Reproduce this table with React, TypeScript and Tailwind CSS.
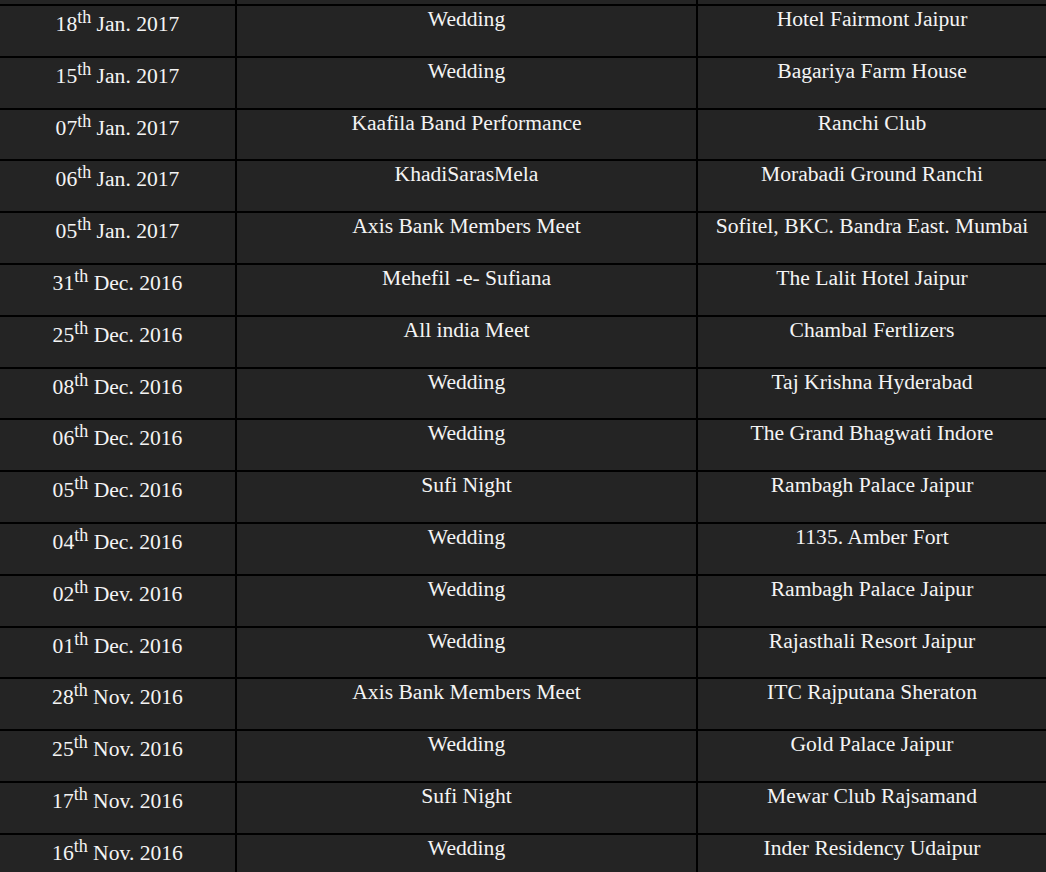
const events = [
  { day: '18', month: 'Jan. 2017', event: 'Wedding', venue: 'Hotel Fairmont Jaipur' },
  { day: '15', month: 'Jan. 2017', event: 'Wedding', venue: 'Bagariya Farm House' },
  { day: '07', month: 'Jan. 2017', event: 'Kaafila Band Performance', venue: 'Ranchi Club' },
  { day: '06', month: 'Jan. 2017', event: 'KhadiSarasMela', venue: 'Morabadi Ground Ranchi' },
  { day: '05', month: 'Jan. 2017', event: 'Axis Bank Members Meet', venue: 'Sofitel, BKC. Bandra East. Mumbai' },
  { day: '31', month: 'Dec. 2016', event: 'Mehefil -e- Sufiana', venue: 'The Lalit Hotel Jaipur' },
  { day: '25', month: 'Dec. 2016', event: 'All india Meet', venue: 'Chambal Fertlizers' },
  { day: '08', month: 'Dec. 2016', event: 'Wedding', venue: 'Taj Krishna Hyderabad' },
  { day: '06', month: 'Dec. 2016', event: 'Wedding', venue: 'The Grand Bhagwati Indore' },
  { day: '05', month: 'Dec. 2016', event: 'Sufi Night', venue: 'Rambagh Palace Jaipur' },
  { day: '04', month: 'Dec. 2016', event: 'Wedding', venue: '1135. Amber Fort' },
  { day: '02', month: 'Dev. 2016', event: 'Wedding', venue: 'Rambagh Palace Jaipur' },
  { day: '01', month: 'Dec. 2016', event: 'Wedding', venue: 'Rajasthali Resort Jaipur' },
  { day: '28', month: 'Nov. 2016', event: 'Axis Bank Members Meet', venue: 'ITC Rajputana Sheraton' },
  { day: '25', month: 'Nov. 2016', event: 'Wedding', venue: 'Gold Palace Jaipur' },
  { day: '17', month: 'Nov. 2016', event: 'Sufi Night', venue: 'Mewar Club Rajsamand' },
  { day: '16', month: 'Nov. 2016', event: 'Wedding', venue: 'Inder Residency Udaipur' },
];

export default function App() {
  return (
    <div className="h-[872px] w-[1046px] overflow-hidden bg-[#242424] text-[21.6px] text-[#f4f4f4] font-['Liberation_Serif','Times_New_Roman',serif]">
      {/* bottom edge of the row scrolled above */}
      <div className="grid h-[4px] grid-cols-[235px_461px_350px]">
        <div />
        <div className="border-l-2 border-black" />
        <div className="border-l-2 border-black" />
      </div>
      {events.map((e, i) => (
        <div
          key={i}
          className="grid h-[51.8px] grid-cols-[235px_461px_350px] border-t-2 border-black leading-[normal]"
        >
          <div className="pt-px text-center">
            {e.day}
            <sup className="static top-0 align-super leading-[normal] [font-size:smaller]">th</sup> {e.month}
          </div>
          <div className="border-l-2 border-black pt-px text-center">{e.event}</div>
          <div className="border-l-2 border-black pt-px text-center">{e.venue}</div>
        </div>
      ))}
    </div>
  );
}
